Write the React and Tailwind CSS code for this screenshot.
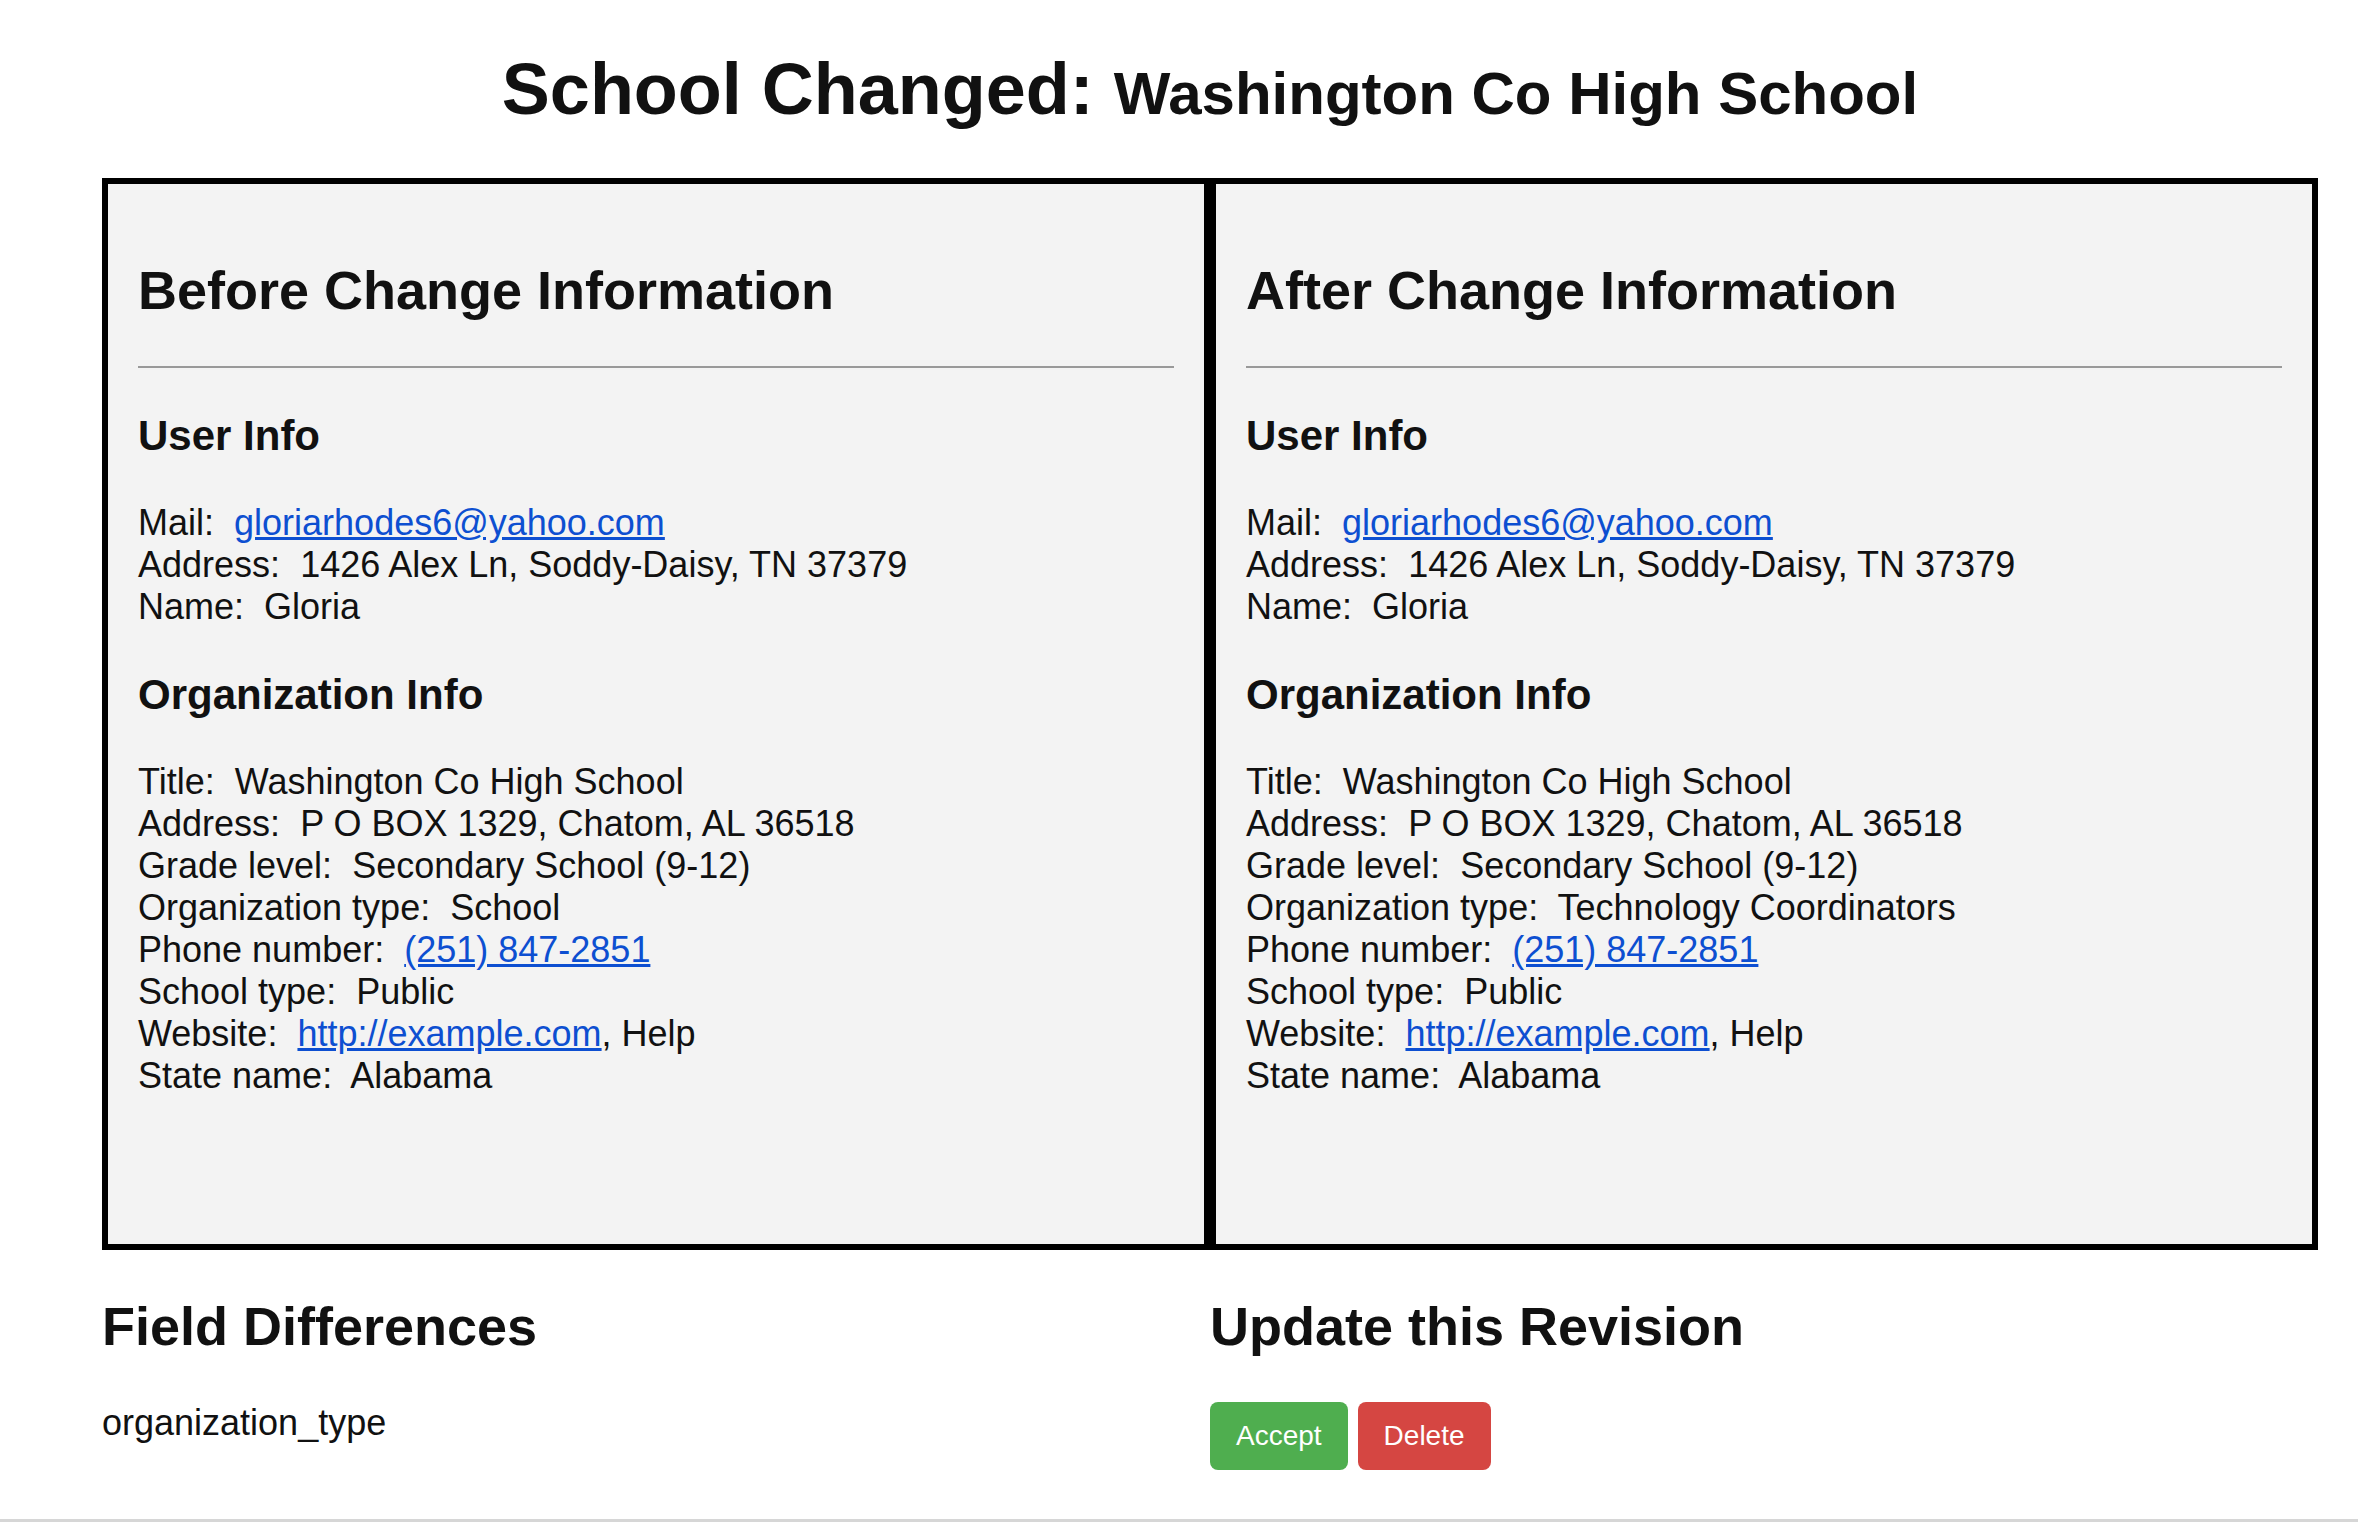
import React from 'react';

const before = {
  mail: 'gloriarhodes6@yahoo.com',
  address: '1426 Alex Ln, Soddy-Daisy, TN 37379',
  name: 'Gloria',
  title: 'Washington Co High School',
  orgAddress: 'P O BOX 1329, Chatom, AL 36518',
  grade: 'Secondary School (9-12)',
  orgType: 'School',
  phone: '(251) 847-2851',
  schoolType: 'Public',
  state: 'Alabama',
};

const after = { ...before, orgType: 'Technology Coordinators' };

function Row({ label, children }) {
  return (
    <>
      {label}:{'\u00a0'} {children}
      <br />
    </>
  );
}

function Link({ children }) {
  return <a href="#" className="text-[#0d4fd1] underline">{children}</a>;
}

function InfoPanel({ heading, data }) {
  return (
    <div className="h-[1072px] border-[6px] border-black bg-[#f3f3f3] px-[30px] pt-[30px]">
      <h2 className="mt-[45px] mb-[45px] text-[54px] font-bold">{heading}</h2>
      <hr className="my-[18px] border-t-2 border-[#999999]" />
      <h3 className="mt-[44px] mb-[42px] text-[42px] font-bold">User Info</h3>
      <p className="my-[36px]">
        <Row label="Mail"><Link>{data.mail}</Link></Row>
        <Row label="Address">{data.address}</Row>
        <Row label="Name">{data.name}</Row>
      </p>
      <h3 className="mt-[43px] mb-[42px] text-[42px] font-bold">Organization Info</h3>
      <p className="my-[36px]">
        <Row label="Title">{data.title}</Row>
        <Row label="Address">{data.orgAddress}</Row>
        <Row label="Grade level">{data.grade}</Row>
        <Row label="Organization type">{data.orgType}</Row>
        <Row label="Phone number"><Link>{data.phone}</Link></Row>
        <Row label="School type">{data.schoolType}</Row>
        <Row label="Website"><Link>http://example.com</Link>, Help</Row>
        <Row label="State name">{data.state}</Row>
      </p>
    </div>
  );
}

export default function App() {
  return (
    <div className="min-h-screen bg-white font-['Liberation_Sans',Arial,sans-serif] text-[36px] leading-[normal] text-[#111111]">
      <div className="ml-[102px] w-[2216px]">
        <h1 className="my-[48px] text-center text-[72px] font-bold">
          School Changed: <span className="text-[60px]">Washington Co High School</span>
        </h1>
        <div className="grid grid-cols-2">
          <InfoPanel heading="Before Change Information" data={before} />
          <InfoPanel heading="After Change Information" data={after} />
        </div>
        <div className="grid grid-cols-2">
          <div>
            <h2 className="mt-[45px] mb-[45px] text-[54px] font-bold">Field Differences</h2>
            <p>organization_type</p>
          </div>
          <div>
            <h2 className="mt-[45px] mb-[45px] text-[54px] font-bold">Update this Revision</h2>
            <div className="flex gap-[10px]">
              <button className="rounded-[8px] bg-[#4fae4f] px-[26px] py-[18px] text-[28px] text-white">
                Accept
              </button>
              <button className="rounded-[8px] bg-[#d54642] px-[26px] py-[18px] text-[28px] text-white">
                Delete
              </button>
            </div>
          </div>
        </div>
      </div>
      <div className="mt-[49px] border-t-[3px] border-[#d6d6d6]" />
    </div>
  );
}
